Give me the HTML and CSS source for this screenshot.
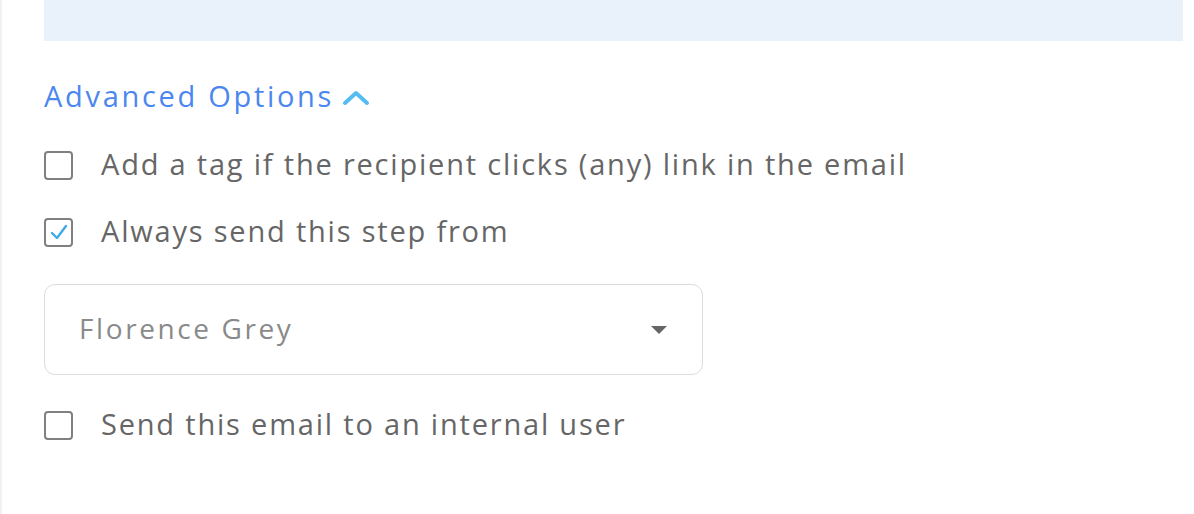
FILE: index.html
```html
<!DOCTYPE html>
<html>
<head>
<meta charset="utf-8">
<link rel="stylesheet" href="styles.css">
</head>
<body>
<div class="page">
  <div class="band"></div>
  <div class="adv">
    <span class="adv-label">Advanced Options</span>
    <svg class="chev" width="28" height="16" viewBox="0 0 28 16"><path d="M3 13 L14 3 L25 13" fill="none" stroke="#56bdf2" stroke-width="4" stroke-linecap="round" stroke-linejoin="round"/></svg>
  </div>
  <div class="opt opt1">
    <span class="box"></span>
    <span class="opt-text">Add a tag if the recipient clicks (any) link in the email</span>
  </div>
  <div class="opt opt2">
    <span class="box checked"><svg width="22" height="22" viewBox="0 0 22 22"><path d="M4 12 L9 17 L18 5" fill="none" stroke="#3fa9ec" stroke-width="2.4" stroke-linecap="round" stroke-linejoin="round"/></svg></span>
    <span class="opt-text">Always send this step from</span>
  </div>
  <div class="select">
    <span class="select-text">Florence Grey</span>
    <span class="caret"></span>
  </div>
  <div class="opt opt3">
    <span class="box"></span>
    <span class="opt-text">Send this email to an internal user</span>
  </div>
</div>
</body>
</html>
```

FILE: styles.css
```css
html, body {
  margin: 0;
  padding: 0;
  background: #fff;
}
body {
  font-family: "Open Sans", "DejaVu Sans", sans-serif;
}
.page {
  width: 1194px;
  height: 514px;
  box-sizing: border-box;
  border-left: 2px solid #f1f1f1;
  padding-left: 42px;
  display: flex;
  flex-direction: column;
  align-items: flex-start;
}
.band {
  width: 1139px;
  height: 41px;
  background: #e9f1fa;
}
.adv {
  display: flex;
  align-items: center;
  gap: 8px;
  margin-top: 38px;
  height: 36px;
}
.adv-label {
  font-size: 29px;
  color: #4b87ef;
  letter-spacing: 2.7px;
  margin-top: -4px;
}
.chev {
  display: block;
  margin-top: 2px;
}
.opt {
  display: flex;
  align-items: center;
  gap: 28px;
  height: 36px;
}
.opt1 { margin-top: 32px; }
.opt2 { margin-top: 31px; }
.opt3 { margin-top: 32px; }
.box {
  width: 25px;
  height: 25px;
  border: 2px solid #808080;
  border-radius: 4px;
  display: flex;
  align-items: center;
  justify-content: center;
  flex-shrink: 0;
}
.opt-text {
  font-size: 29px;
  color: #666;
  letter-spacing: 1.8px;
  margin-top: -4px;
}
.select {
  margin-top: 34px;
  width: 659px;
  height: 91px;
  box-sizing: border-box;
  border: 1.5px solid #dcdcdc;
  border-radius: 11px;
  display: flex;
  align-items: center;
  justify-content: space-between;
  padding: 0 35px 0 34px;
}
.select-text {
  font-size: 28px;
  color: #8a8a8a;
  letter-spacing: 2.6px;
  margin-top: -4px;
}
.caret {
  width: 0;
  height: 0;
  border-left: 8px solid transparent;
  border-right: 8px solid transparent;
  border-top: 8px solid #666;
}
```
